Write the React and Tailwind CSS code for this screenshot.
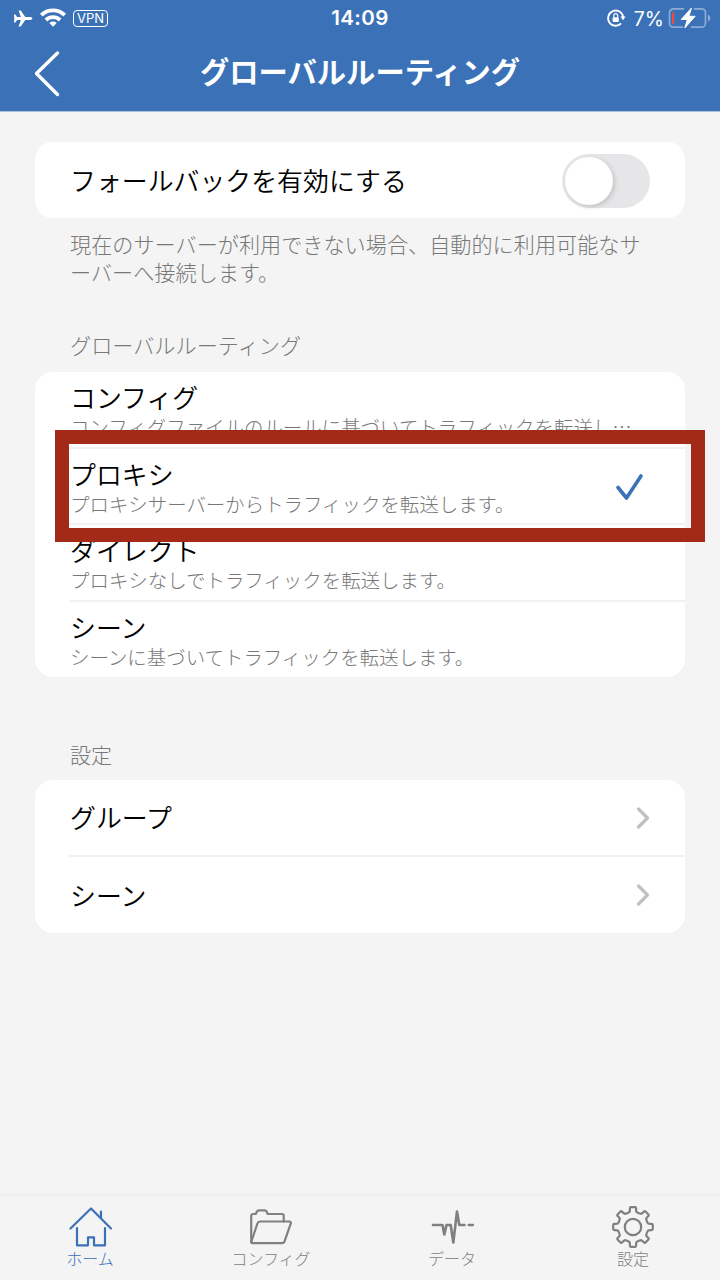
import clsx from 'clsx';

const routes = [
  { title: 'コンフィグ', note: 'コンフィグファイルのルールに基づいてトラフィックを転送し…' },
  { title: 'プロキシ', note: 'プロキシサーバーからトラフィックを転送します。', checked: true },
  { title: 'ダイレクト', note: 'プロキシなしでトラフィックを転送します。' },
  { title: 'シーン', note: 'シーンに基づいてトラフィックを転送します。' },
];

const settings = ['グループ', 'シーン'];

// Outline of an 8-tooth gear around (22, 22)
const point = (r, deg) => {
  const a = ((deg - 90) * Math.PI) / 180;
  return `${(22 + r * Math.cos(a)).toFixed(2)} ${(22 + r * Math.sin(a)).toFixed(2)}`;
};

const gearPath = () => {
  let d = '';
  for (let i = 0; i < 8; i++) {
    const c = i * 45;
    d += `${i === 0 ? 'M' : 'L'}${point(15.6, c - 12.5)}`;
    d += `Q${point(16.6, c - 10)} ${point(19, c - 9.5)}`;
    d += `Q${point(20, c - 9)} ${point(19.9, c - 6)}`;
    d += `L${point(19.9, c + 6)}`;
    d += `Q${point(20, c + 9)} ${point(19, c + 9.5)}`;
    d += `Q${point(16.6, c + 10)} ${point(15.6, c + 12.5)}`;
    d += `Q${point(14.6, c + 22.5)} ${point(15.6, c + 32.5)}`;
  }
  return d + 'Z';
};

function StatusBar() {
  return (
    <div className="grid h-9 grid-cols-3 items-center font-['Inter','Liberation_Sans',sans-serif] text-white">
      <div className="flex items-center pl-[13px]">
        <svg className="h-[19px] w-5" viewBox="0 0 20 19" fill="currentColor">
          <path d="M19.4 9.5c0 .8-1.3 1.5-2.8 1.5h-4.3l-4.6 6.6H5.6L7.9 11H4.1l-1.8 2.4H.9L1.4 9.5.9 5.6h1.4L4.1 8h3.8L5.6 1.4h2.1L12.3 8h4.3c1.5 0 2.8.7 2.8 1.5z" />
        </svg>
        <svg className="ml-[6px] h-5 w-7" viewBox="0 0 28 20" fill="none" stroke="currentColor" strokeWidth="3.9">
          <path d="M2.3 7.2a16.6 16.6 0 0 1 23.4 0" />
          <path d="M6.9 12a10.1 10.1 0 0 1 14.2 0" />
          <path d="M14 18.8l-3.7-3.9a5.4 5.4 0 0 1 7.4 0z" fill="currentColor" stroke="none" />
        </svg>
        <span className="ml-[6px] flex h-[17px] w-[35px] items-center justify-center rounded-[4px] border-[1.5px] border-white text-[13px] leading-none">
          VPN
        </span>
      </div>
      <div className="pt-px text-center text-[20.5px] font-semibold leading-none tracking-[0.4px]">14:09</div>
      <div className="flex items-center justify-end pr-[9px]">
        <svg className="h-5 w-5" viewBox="0 0 20 20" fill="none" stroke="currentColor" strokeWidth="1.8">
          <path d="M15.2 15.4a7.6 7.6 0 1 1 2-6.4" />
          <path d="M14.4 8.6h5.2L17 12.3z" fill="currentColor" stroke="none" />
          <path d="M7.8 9.3V7.6a1.9 1.9 0 0 1 3.8 0v1.7" strokeWidth="1.2" />
          <rect x="6.6" y="9.2" width="6.2" height="4.8" rx=".8" fill="currentColor" stroke="none" />
        </svg>
        <span className="mt-[3px] ml-2 text-[19.5px] leading-none">7%</span>
        <svg className="ml-[4px] h-6 w-[43px]" viewBox="0 0 43 24" fill="none">
          <path d="M16 2.8H5.5a4 4 0 0 0-4 4v10.4a4 4 0 0 0 4 4h9.5M26 2.8h7.5a4 4 0 0 1 4 4v10.4a4 4 0 0 1-4 4H23" stroke="#8cabd5" strokeWidth="1.7" />
          <path d="M40 8.5c1.7.7 2.3 2 2.3 3.5s-.6 2.8-2.3 3.5z" fill="#8cabd5" />
          <path d="M4 7.5a2 2 0 0 1 2-1.5v12a2 2 0 0 1-2-1.5z" fill="#f4493d" />
          <path d="M23.5 2l-10.3 11.5h6.2L16.8 22l10.3-11.7h-6.2z" fill="white" stroke="white" strokeWidth="1" strokeLinejoin="round" />
        </svg>
      </div>
    </div>
  );
}

function Header() {
  return (
    <header className="h-28 border-b border-[#a9c0df] bg-[#3a71b7] text-white">
      <StatusBar />
      <div className="grid h-[73px] grid-cols-[100px_1fr_100px] items-center">
        <svg className="ml-[33px] h-12 w-7" viewBox="0 0 28 48" fill="none" stroke="currentColor" strokeWidth="3.4" strokeLinecap="round" strokeLinejoin="round">
          <path d="M24.5 4L3.5 24.5l21 21" />
        </svg>
        <h1 className="-mt-[3px] text-center text-[29.3px] font-bold leading-none">グローバルルーティング</h1>
      </div>
    </header>
  );
}

function Chevron() {
  return (
    <svg className="h-6 w-4" viewBox="0 0 16 24" fill="none" stroke="#c0c0c0" strokeWidth="3.2" strokeLinecap="round" strokeLinejoin="round">
      <path d="M3.5 3l9 9-9 9" />
    </svg>
  );
}

function TabIcon({ name }) {
  return (
    <svg className="h-11 w-11" viewBox="0 0 44 44" fill="none" stroke="currentColor" strokeWidth="2.2" strokeLinecap="round" strokeLinejoin="round">
      {name === 'home' && (
        <>
          <path d="M2.5 23.5L23 3.5l20 20M33 13V6.5" />
          <path d="M9 23v17.3h11v-8h6v8h11V23" />
        </>
      )}
      {name === 'folder' && (
        <>
          <path d="M2.2 37V10.5a2 2 0 0 1 2-1.5h2.6l1-2.2a2.5 2.5 0 0 1 2.2-1.5h5.5a2.5 2.5 0 0 1 2.2 1.5l1 2.2h14.5a1.5 1.5 0 0 1 1.5 1.5v6" />
          <path d="M2.2 37l6.2-18.5a3 3 0 0 1 2.5-2h29.5a1.4 1.4 0 0 1 1.4 1.9l-6.2 17.8a3.3 3.3 0 0 1-2.8 2H3.5c-1 0-1.5-.6-1.3-1.2z" />
        </>
      )}
      {name === 'pulse' && (
        <path strokeWidth="2.6" d="M3 20h9.5l1.8 9.5L16.5 20h4.2l2.6 17.5L27 6.500 29.3 20h5.2M38.8 20h4" />
      )}
      {name === 'gear' && (
        <>
          <path d={gearPath()} />
          <circle cx="22" cy="22" r="8.2" />
        </>
      )}
    </svg>
  );
}

const tabs = [
  { label: 'ホーム', icon: 'home', active: true },
  { label: 'コンフィグ', icon: 'folder' },
  { label: 'データ', icon: 'pulse' },
  { label: '設定', icon: 'gear' },
];

export default function App() {
  return (
    <div className="relative flex h-[1280px] w-[720px] flex-col overflow-hidden bg-[#f4f4f4] font-['Noto_Sans_CJK_JP',sans-serif] text-black">
      <Header />

      <main className="flex-1 px-[35px] pt-[30px] font-[350]">
        <section className="flex h-[76px] items-center justify-between rounded-[18px] bg-white pl-[35px] pr-[35px]">
          <span className="text-[25.9px] leading-none">フォールバックを有効にする</span>
          <button type="button" role="switch" aria-checked="false" className="mt-px h-[54px] w-[88px] rounded-full bg-[#e6e6e8] p-[3px]">
            <span className="block h-12 w-12 rounded-full bg-white shadow-[2px_2px_5px_rgba(0,0,0,0.15)]" />
          </button>
        </section>
        <p className="mt-3 w-[580px] pl-[35px] text-[21.15px] font-light leading-7 whitespace-nowrap text-[#787878]">
          現在のサーバーが利用できない場合、自動的に利用可能なサ
          <br />
          ーバーへ接続します。
        </p>

        <h2 className="mt-[45px] pl-[35px] text-[21.15px] font-light leading-7 text-[#787878]">グローバルルーティング</h2>
        <section className="mt-[13px] rounded-[18px] bg-white pl-[34px]">
          {routes.map((route, i) => (
            <div
              key={route.title}
              className={clsx(
                'flex items-center justify-between pr-[39px]',
                i < routes.length - 1 ? 'h-[76.6px] border-b-2 border-[#f2f2f2]' : 'h-[75.4px]'
              )}
            >
              <div className="pl-px whitespace-nowrap">
                <div className="text-[25.9px] leading-9">{route.title}</div>
                <div className="text-[19.45px] font-light leading-6 text-[#787878]">{route.note}</div>
              </div>
              {route.checked && (
                <svg className="mt-[2px] h-8 w-8 shrink-0" viewBox="0 0 32 32" fill="none" stroke="#3a71b7" strokeWidth="3.6" strokeLinecap="round" strokeLinejoin="round">
                  <path d="M4 16.5l8.500 10.5L27 5" />
                </svg>
              )}
            </div>
          ))}
        </section>

        <h2 className="mt-[63px] pl-[35px] text-[21px] font-light leading-7 text-[#787878]">設定</h2>
        <section className="mt-3 rounded-[18px] bg-white pl-[34px]">
          {settings.map((label, i) => (
            <div
              key={label}
              className={clsx(
                'flex items-center justify-between pl-px pr-[34px]',
                i < settings.length - 1 ? 'h-[77px] border-b-2 border-[#f2f2f2]' : 'h-[76px]'
              )}
            >
              <span className="-mt-px text-[25.9px] leading-none">{label}</span>
              <Chevron />
            </div>
          ))}
        </section>
      </main>

      <nav className="grid h-[86px] grid-cols-[180px_182px_180px_182px] border-t-2 border-[#efefef] pt-[9px] font-light">
        {tabs.map((tab) => (
          <div key={tab.label} className={clsx('flex flex-col items-center', tab.active ? 'text-[#3a71b7]' : 'text-[#808080]')}>
            <TabIcon name={tab.icon} />
            <span className="-mt-px text-[16px] leading-5">{tab.label}</span>
          </div>
        ))}
      </nav>

      {/* Highlight around the proxy row */}
      <div className="pointer-events-none absolute top-[430px] left-[55px] h-[112px] w-[650px] border-[14px] border-[#a42a18]" />
    </div>
  );
}
